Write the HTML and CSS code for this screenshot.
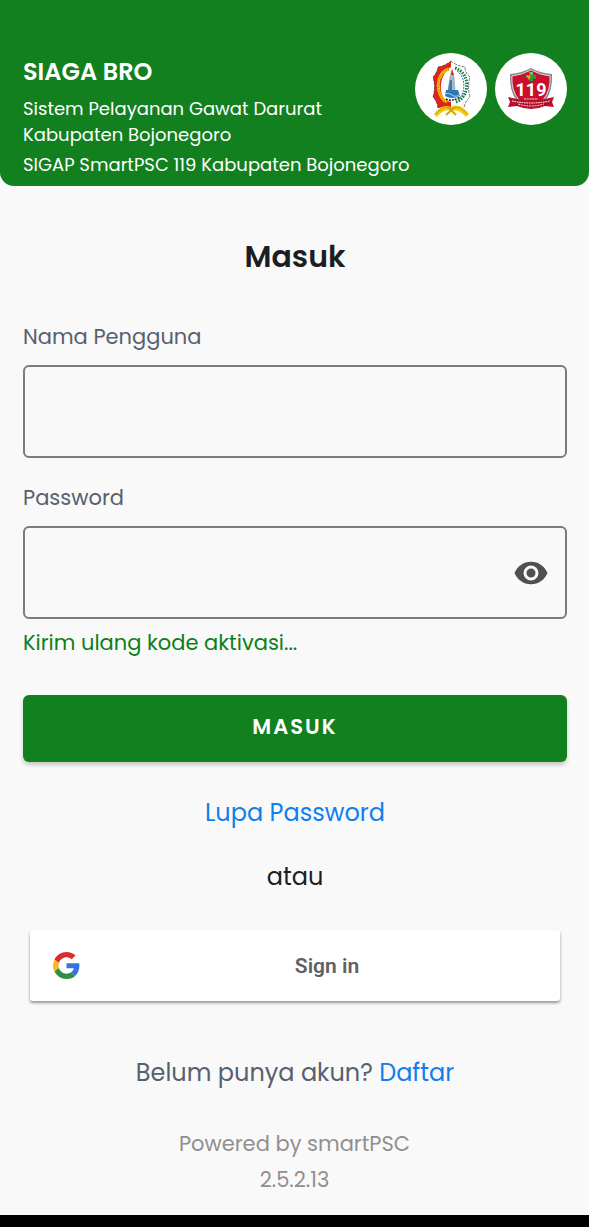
FILE: index.html
```html
<!DOCTYPE html>
<html lang="id">
<head>
    <meta charset="UTF-8">
    <meta name="viewport" content="width=device-width, initial-scale=1.0">
    <title>SIAGA BRO</title>
    <link rel="stylesheet" href="styles.css">
</head>
<body>
    <header class="header">
        <div class="header-text">
            <h1>SIAGA BRO</h1>
            <p>Sistem Pelayanan Gawat Darurat Kabupaten Bojonegoro</p>
            <p>SIGAP SmartPSC 119 Kabupaten Bojonegoro</p>
        </div>
        <div class="logos">
            <svg class="logo" viewBox="0 0 72 72" role="img" aria-label="Kabupaten Bojonegoro">
                <circle cx="36" cy="36" r="36" fill="#fff"/>
                <path d="M36 8 Q30 13 23 14 Q22 20 18 24 Q21 34 18 44 Q22 48 23 55 L36 54 Z" fill="#e2231a"/>
                <path d="M36 8 Q42 13 50 14 Q50 20 55 24 Q52 34 55 44 Q50 48 49 55 L36 54 Z" fill="#fff"/>
                <path d="M36 8 Q42 13 50 14 Q50 20 55 24 Q52 34 55 44 Q50 48 49 55 M23 55 Q22 48 18 44 Q21 34 18 24 Q22 20 23 14 Q30 13 36 8" fill="none" stroke="#222" stroke-width=".6" stroke-dasharray="3 1"/>
                <path d="M36 14 C48 16 50 44 38 49 L31 48 C23 40 24 22 36 14Z" fill="#fff"/>
                <path d="M34 16 C20 20 20 43 32 49" fill="none" stroke="#f4c400" stroke-width="3"/>
                <path d="M34 16 C20 20 20 43 32 49" fill="none" stroke="#a35a12" stroke-width="1" stroke-dasharray="1 1.5"/>
                <path d="M40 15 C56 20 55 44 41 49" fill="none" stroke="#14804f" stroke-width="3" stroke-dasharray="1.6 1.2"/>
                <path d="M42 18 C51 24 51 40 43 47" fill="none" stroke="#247fa0" stroke-width="1" stroke-dasharray="2 1"/>
                <path d="M37 17 L39 24 L40 38 H33 L35 24Z" fill="#a9bcc5" stroke="#718894" stroke-width=".5"/>
                <path d="M37 16 L39 22 H36Z" fill="#e2231a"/>
                <path d="M35 27 H37 V38 H33Z" fill="#347eae"/>
                <path d="M31 37 H43 L45 43 Q37 47 30 43Z" fill="#2b79b7"/>
                <path d="M30 41 Q33 39 37 42 T45 41" fill="none" stroke="#9fd5ed" stroke-width="1"/>
                <path d="M31 46 Q37 49 45 44" fill="none" stroke="#222" stroke-width="1.5" stroke-dasharray="2 1"/>
                <path d="M19 61 Q27 50 36 54 Q45 49 54 61 L51 64 Q43 55 36 58 Q29 55 22 64Z" fill="#f5c915"/>
                <path d="M21 61 Q30 51 37 56 M52 61 Q43 51 36 56" fill="none" stroke="#8f6919" stroke-width=".7" stroke-dasharray="2 1"/>
                <path d="M33 54 L41 62 M40 54 L31 62" stroke="#d5a800" stroke-width="2"/>
            </svg>
            <svg class="logo" viewBox="0 0 72 72" role="img" aria-label="PSC 119">
                <circle cx="36" cy="36" r="36" fill="#fff"/>
                <path d="M36 15 Q45 20 57 21 Q58 38 50 48 L36 56 L22 48 Q14 38 15 21 Q27 20 36 15Z" fill="#888c8e"/>
                <path d="M36 17 Q45 22 55 23 Q56 37 48 47 L36 54 L24 47 Q16 37 17 23 Q27 22 36 17Z" fill="#c8102e" stroke="#fff" stroke-width=".7"/>
                <path d="M34 19 H38 V22 H41 V26 H38 V28 H34 V25 H31 V22 H34Z" fill="#259747"/>
                <path d="M34 19 H38 V22 H36Z" fill="#8bc34a"/>
                <path d="M31 22 L36 23 L34 27Z" fill="#f2a326"/>
                <text x="36" y="43" class="logo-number">119</text>
                <path d="M13 44 L22 46 Q36 48 50 46 L59 44 L57 49 L59 54 L50 53 Q36 59 22 53 L13 54 L15 49Z" fill="#b80f2b"/>
                <path d="M22 46 V53 M50 46 V53" stroke="#7c0920" stroke-width=".7"/>
                <path d="M29 46 H43" stroke="#fff" stroke-width=".8" stroke-dasharray="2 .7"/>
                <path d="M17 48 Q36 52 55 48" fill="none" stroke="#fff" stroke-width="1" stroke-dasharray="1.7 .7"/>
                <path d="M23 51 Q36 55 49 51" fill="none" stroke="#fff" stroke-width=".8" stroke-dasharray="2 .8"/>
            </svg>
        </div>
    </header>

    <main class="container">
        <h2>Masuk</h2>

        <form>
            <div class="field">
                <label for="username">Nama Pengguna</label>
                <input type="text" id="username" autocomplete="username">
            </div>

            <div class="field">
                <label for="password">Password</label>
                <div class="password-box">
                    <input type="password" id="password" autocomplete="current-password">
                    <button type="button" class="toggle" aria-label="Tampilkan password">
                        <svg viewBox="0 0 24 24"><path fill="#505050" d="M12 4.5C7 4.5 2.73 7.61 1 12c1.73 4.39 6 7.5 11 7.5s9.27-3.11 11-7.5c-1.73-4.39-6-7.5-11-7.5zM12 17a5 5 0 1 1 0-10 5 5 0 0 1 0 10zm0-8a3 3 0 1 0 0 6 3 3 0 0 0 0-6z"/></svg>
                    </button>
                </div>
            </div>

            <a href="#" class="resend">Kirim ulang kode aktivasi...</a>
            <button type="submit" class="btn-login">MASUK</button>
        </form>

        <a href="#" class="forgot">Lupa Password</a>
        <p class="or">atau</p>

        <button type="button" class="btn-google">
            <svg viewBox="0 0 48 48" aria-hidden="true">
                <path fill="#dc2c2c" d="M24 9.5c3.54 0 6.71 1.22 9.21 3.6l6.85-6.85C35.9 2.38 30.47 0 24 0 14.62 0 6.51 5.38 2.56 13.22l7.98 6.19C12.43 13.72 17.74 9.5 24 9.5z"/>
                <path fill="#3871e0" d="M46.98 24.55c0-1.57-.15-3.09-.38-4.55H24v9.02h12.94c-.58 2.96-2.26 5.48-4.78 7.18l7.73 6c4.51-4.18 7.09-10.36 7.09-17.65z"/>
                <path fill="#f9b916" d="M10.53 28.59A14.5 14.5 0 0 1 9.77 24c0-1.6.27-3.14.76-4.59l-7.98-6.19A23.9 23.9 0 0 0 0 24c0 3.88.92 7.54 2.56 10.78l7.97-6.19z"/>
                <path fill="#2b9144" d="M24 48c6.48 0 11.93-2.13 15.89-5.81l-7.73-6c-2.15 1.45-4.92 2.3-8.16 2.3-6.26 0-11.57-4.22-13.47-9.91l-7.98 6.19C6.51 42.62 14.62 48 24 48z"/>
            </svg>
            <span>Sign in</span>
        </button>

        <p class="register">Belum punya akun? <a href="#">Daftar</a></p>
    </main>

    <footer class="footer">
        <p>Powered by smartPSC</p>
        <p>2.5.2.13</p>
    </footer>
    <div class="nav-bar"></div>
</body>
</html>
```
FILE: styles.css
```css
:root {
    --primary-color: #13801f;
    --link-color: #107fed;
    --text-color: #56606e;
    --page-color: #f9f9f9;
}

* {
    box-sizing: border-box;
}

body {
    margin: 0;
    min-height: 100vh;
    display: flex;
    flex-direction: column;
    font-family: Poppins, Inter, "Liberation Sans", sans-serif;
    background-color: var(--page-color);
    color: #1b1e24;
}

h1, h2, p {
    margin: 0;
}

a {
    text-decoration: none;
    color: var(--link-color);
}

button {
    border: none;
    cursor: pointer;
}

.header {
    display: flex;
    justify-content: space-between;
    padding: 53px 22px 8px 23px;
    background-color: var(--primary-color);
    border-radius: 0 0 14px 14px;
    color: white;
}

.header h1 {
    font-size: 24px;
    font-weight: 600;
    line-height: 38px;
    margin-bottom: 5px;
}

.header p {
    font-size: 18px;
    line-height: 26px;
    margin-bottom: 4px;
}

.header p:last-child {
    margin-bottom: 0;
    white-space: nowrap;
}

.header-text {
    flex: 1;
    min-width: 0;
}

.logos {
    display: flex;
    gap: 8px;
}

.logo {
    width: 72px;
    height: 72px;
}

.logo-number {
    font-family: "Liberation Sans Narrow", Roboto, sans-serif;
    font-size: 18px;
    font-weight: 700;
    text-anchor: middle;
    fill: white;
}

.container {
    display: flex;
    flex-direction: column;
    padding: 48px 22px 0 23px;
}

h2 {
    font-size: 30px;
    font-weight: 600;
    line-height: 46px;
    text-align: center;
    margin-bottom: 40px;
}

form {
    display: flex;
    flex-direction: column;
}

.field {
    margin-bottom: 23px;
}

.field label {
    display: block;
    font-size: 21px;
    line-height: 34px;
    margin-bottom: 11px;
    color: var(--text-color);
}

.field input {
    display: block;
    width: 100%;
    height: 93px;
    padding: 0 20px;
    border: 2px solid #7b7b7b;
    border-radius: 6px;
    background-color: transparent;
    font: inherit;
    font-size: 21px;
}

.password-box {
    position: relative;
}

.password-box input {
    padding-right: 70px;
}

.toggle {
    position: absolute;
    top: 0;
    right: 18px;
    height: 100%;
    padding: 0;
    background: none;
}

.toggle svg {
    display: block;
    width: 36px;
    height: 36px;
}

.field + .resend {
    margin-top: -16px;
}

.resend {
    font-size: 21px;
    line-height: 34px;
    color: #0b801a;
}

.btn-login {
    height: 67px;
    margin-top: 35px;
    padding-bottom: 6px;
    border-radius: 6px;
    background-color: var(--primary-color);
    box-shadow: 0 3px 4px rgba(0,0,0,0.2);
    color: white;
    font: inherit;
    font-size: 21px;
    font-weight: 600;
    letter-spacing: 2px;
}

.forgot {
    align-self: center;
    margin-top: 32px;
    font-size: 24px;
    line-height: 38px;
}

.or {
    margin-top: 26px;
    font-size: 24px;
    line-height: 38px;
    text-align: center;
}

.btn-google {
    display: flex;
    align-items: center;
    height: 71px;
    margin: 34px 7px 0;
    padding: 0 0 0 23px;
    border-radius: 3px;
    background-color: white;
    box-shadow: 0 2px 3px rgba(0,0,0,0.4);
    color: #616161;
    font-family: Roboto, sans-serif;
    font-size: 21px;
    font-weight: 600;
}

.btn-google svg {
    width: 27px;
    height: 27px;
}

.btn-google span {
    flex: 1;
    margin-left: 14px;
}

.register {
    margin-top: 53px;
    font-size: 24px;
    line-height: 38px;
    text-align: center;
    color: var(--text-color);
}

.footer {
    padding: 34px 22px 17px;
    font-size: 21px;
    line-height: 36px;
    text-align: center;
    color: #909090;
}

.nav-bar {
    height: 12px;
    margin-top: auto;
    background-color: black;
}
```
